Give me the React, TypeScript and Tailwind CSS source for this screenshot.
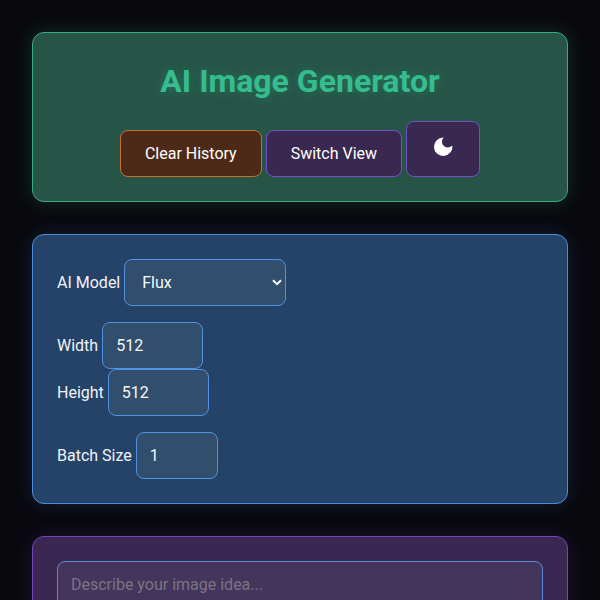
import { useState } from "react"
import type { ReactNode } from "react"

const fieldClass = "h-[47px] rounded-lg border border-[#5093e2] bg-[#314e6c] text-base text-[#f5f7fa] outline-none"
const buttonClass = "h-[47px] rounded-lg border px-6 text-base text-white"

interface NumberFieldProps {
    id: string;
    label: string;
    value: number;
    width: string;
    onChange: (value: number) => void;
}

const NumberField = ({ id, label, value, width, onChange }: NumberFieldProps) => (
    <div className="flex items-center gap-1">
        <label htmlFor={id}>{label}</label>
        <input
            id={id}
            type="number"
            value={value}
            onChange={(e) => onChange(Number(e.target.value))}
            className={`${fieldClass} ${width} px-[13px]`}
        />
    </div>
)

const Panel = ({ className, children }: { className: string; children: ReactNode }) => (
    <section className={`rounded-xl border p-6 ${className}`}>{children}</section>
)

const MoonIcon = () => (
    <svg viewBox="0 0 20 20" className="h-5 w-5" fill="currentColor" aria-hidden="true">
        <path d="M10.6 .6 A9.2 9.2 0 1 0 19.3 8.6 C16.6 11.2 12.6 11 10.4 8.6 C8.4 6.2 8.6 2.8 10.6 .6 Z" />
    </svg>
)

const App = () => {
    const [model, setModel] = useState("flux")
    const [width, setWidth] = useState(512)
    const [height, setHeight] = useState(512)
    const [batchSize, setBatchSize] = useState(1)
    const [prompt, setPrompt] = useState("")

    return (
        <div className="min-h-screen bg-[#09090e] font-[Roboto,sans-serif] text-base text-[#f0f4fa]">
            <main className="flex flex-col gap-8 p-8">
                <Panel className="border-[#3aaa80] bg-[#265548] text-center shadow-[0_0_20px_rgba(52,190,140,0.2)]">
                    <h1 className="mb-4 text-[32px] leading-[48px] font-bold text-[#34bd8f] [text-shadow:0_0_10px_rgba(52,189,143,0.3)]">
                        AI Image Generator
                    </h1>
                    <div className="flex flex-wrap items-end justify-center gap-1">
                        <button className={`${buttonClass} border-[#c4712c] bg-[#4d2a17]`}>Clear History</button>
                        <button className={`${buttonClass} border-[#7350c8] bg-[#392850]`}>Switch View</button>
                        <button
                            aria-label="Toggle theme"
                            className="flex h-14 w-[74px] items-center justify-center rounded-lg border border-[#7350c8] bg-[#392850] pb-1 text-white"
                        >
                            <MoonIcon />
                        </button>
                    </div>
                </Panel>

                <Panel className="flex flex-col gap-4 border-[#4b8ddb] bg-[#254268] shadow-[0_0_20px_rgba(60,130,220,0.18)]">
                    <div className="flex items-center gap-1">
                        <label htmlFor="model">AI Model</label>
                        <div className="relative">
                            <select
                                id="model"
                                value={model}
                                onChange={(e) => setModel(e.target.value)}
                                className={`${fieldClass} block w-[162px] appearance-none pr-8 pl-[17px]`}
                            >
                                <option value="flux">Flux</option>
                                <option value="turbo">Turbo</option>
                            </select>
                            <svg
                                viewBox="0 0 10 7"
                                className="pointer-events-none absolute top-5 right-1 h-[7px] w-[10px] text-white"
                                fill="none"
                                stroke="currentColor"
                                strokeWidth="2"
                                aria-hidden="true"
                            >
                                <path d="M1 1.2 L5 5.2 L9 1.2" />
                            </svg>
                        </div>
                    </div>
                    <div>
                        <NumberField id="width" label="Width" value={width} width="w-[101px]" onChange={setWidth} />
                        <NumberField id="height" label="Height" value={height} width="w-[101px]" onChange={setHeight} />
                    </div>
                    <NumberField id="batch" label="Batch Size" value={batchSize} width="w-[82px]" onChange={setBatchSize} />
                </Panel>

                <Panel className="border-[#7244bd] bg-[#3b2852] shadow-[0_0_20px_rgba(120,70,200,0.18)]">
                    <textarea
                        aria-label="Prompt"
                        placeholder="Describe your image idea..."
                        value={prompt}
                        onChange={(e) => setPrompt(e.target.value)}
                        className="block h-30 w-full resize-none rounded-lg border border-[#5a8bd8] bg-[#44355c] px-[13px] py-[11px] text-base text-white outline-none placeholder:text-[#7b7383]"
                    />
                </Panel>
            </main>
        </div>
    )
}

export default App
